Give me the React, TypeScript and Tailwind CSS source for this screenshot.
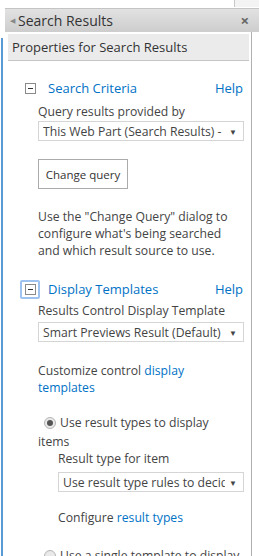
import React from 'react';

const font = { fontFamily: '"Open Sans", "Noto Sans", sans-serif' };

const Toggle = ({ focused }: { focused?: boolean }) => (
  <div className={`w-[20px] h-[19px] flex items-center justify-center ${focused ? 'border-2 border-[#9fc3f0] rounded-[2px]' : ''}`}>
    <div className="w-[11px] h-[11px] border border-[#8a8a8a] bg-white flex items-center justify-center">
      <div className="w-[5px] h-[1px] bg-[#333]" />
    </div>
  </div>
);

const Select = ({ value, className = '' }: { value: string; className?: string }) => (
  <div className={`h-[20px] border border-[#d5d5d5] bg-white flex items-center pl-[4px] pr-[6px] ${className}`}>
    <span className="flex-1 min-w-0 overflow-hidden whitespace-nowrap text-[#444]">{value}</span>
    <span className="text-[8px] text-[#444] ml-[4px]">▼</span>
  </div>
);

const Radio = ({ checked }: { checked?: boolean }) => (
  <div className="w-[12px] h-[12px] rounded-full border border-[#b5b5b5] bg-[#e9e9e9] flex items-center justify-center shrink-0">
    {checked && <div className="w-[6px] h-[6px] rounded-full bg-[#555]" />}
  </div>
);

const SectionHead = ({ title, focused }: { title: string; focused?: boolean }) => (
  <div className="flex items-center h-[19px] pl-[17px] pr-[8px]">
    <Toggle focused={focused} />
    <span className="ml-[8px] text-[#0072c6] text-[13px]">{title}</span>
    <span className="ml-auto text-[#0072c6] text-[13px]">Help</span>
  </div>
);

export default function App() {
  return (
    <div className="w-[259px] h-[556px] bg-white overflow-hidden flex flex-col text-[12.2px] text-[#444] leading-[17px]" style={font}>
      {/* top strip */}
      <div className="h-[8px] flex shrink-0">
        <div className="flex-1" />
        <div className="w-[25px] h-[7px] bg-[#f3f3f3] border-l border-[#c8c8c8]" />
      </div>

      {/* header */}
      <div className="ml-[5px] h-[24px] shrink-0 bg-gradient-to-b from-[#e2e2e2] to-[#cdcdcd] border-t border-[#c4c4c4] flex items-center">
        <span className="text-[7px] text-[#888] ml-[5px]">◀</span>
        <span className="ml-[3px] text-[14px] text-[#333]">Search Results</span>
        <span className="ml-auto mr-[10px] text-[15px] font-bold text-[#666]">×</span>
      </div>

      {/* body */}
      <div className="flex flex-1 min-h-0">
        <div className="w-[2px] ml-[1px] mt-[6px] bg-[#5b9bd5]" />
        <div className="w-[249px] border-r border-[#b0b0b0] pt-[2px]">
          <div className="ml-[5px] mr-[2px] h-[27px] bg-[#ebebeb] border-b border-[#c6c6c6] flex items-center pl-[4px] text-[13px] text-[#333]">
            Properties for Search Results
          </div>

          <div className="mt-[18px]">
            <SectionHead title="Search Criteria" />
          </div>
          <div className="pl-[35px] pr-[7px] mt-[5px]">
            <div>Query results provided by</div>
            <Select value="This Web Part (Search Results) - Default" className="mt-[1px]" />
            <button className="mt-[18px] w-[90px] h-[30px] border border-[#ababab] bg-white text-[11.5px] text-[#333] block">
              Change query
            </button>
            <p className="mt-[19px] w-[205px]">
              Use the "Change Query" dialog to configure what's being searched and which result source to use.
            </p>
          </div>

          <div className="mt-[21px]">
            <SectionHead title="Display Templates" focused />
          </div>
          <div className="pl-[35px] pr-[7px] mt-[3px]">
            <div>Results Control Display Template</div>
            <Select value="Smart Previews Result (Default)" className="mt-[3px]" />
            <p className="mt-[20px] w-[200px]">
              Customize control <span className="text-[#0072c6]">display templates</span>
            </p>
            <div className="mt-[18px] flex items-center pl-[6px]">
              <Radio checked />
              <span className="ml-[4px]">Use result types to display</span>
            </div>
            <div className="mt-[2px]">items</div>
            <div className="pl-[20px]">
              <div>Result type for item</div>
              <Select value="Use result type rules to decide" className="mt-[5px]" />
              <div className="mt-[17px]">
                Configure <span className="text-[#0072c6]">result types</span>
              </div>
            </div>
            <div className="mt-[21px] flex items-center pl-[6px]">
              <Radio />
              <span className="ml-[4px] whitespace-nowrap">Use a single template to display</span>
            </div>
          </div>
        </div>
      </div>
    </div>
  );
}
